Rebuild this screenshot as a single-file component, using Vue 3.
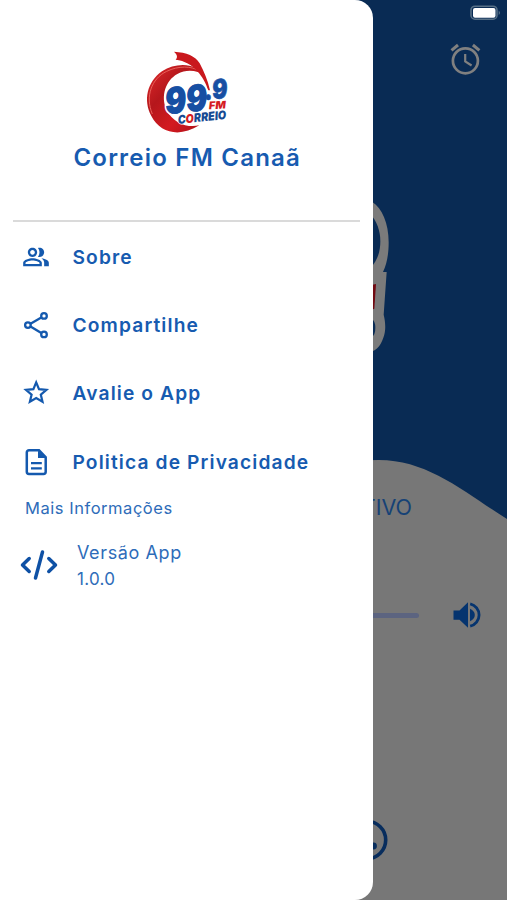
<script setup>
const menu = [
  { id: 'about', label: 'Sobre' },
  { id: 'share', label: 'Compartilhe' },
  { id: 'rate', label: 'Avalie o App' },
  { id: 'privacy', label: 'Politica de Privacidade' },
]
const icons = {
  about: 'M16.67 13.13C18.04 14.06 19 15.32 19 17v3h4v-3c0-2.18-3.57-3.47-6.33-3.87zM15 12c2.21 0 4-1.79 4-4s-1.79-4-4-4c-.47 0-.91.1-1.33.24C14.5 5.27 15 6.58 15 8s-.5 2.73-1.33 3.76c.42.14.86.24 1.33.24zM9 12c2.21 0 4-1.79 4-4s-1.79-4-4-4-4 1.79-4 4 1.79 4 4 4zm0-6c1.1 0 2 .9 2 2s-.9 2-2 2-2-.9-2-2 .9-2 2-2zM9 13c-2.67 0-8 1.34-8 4v3h16v-3c0-2.66-5.33-4-8-4zm6 5H3v-.99C3.2 16.29 6.3 15 9 15s5.8 1.29 6 2v1z',
}
</script>

<template>
  <div class="screen">
    <main class="player">
      <svg class="backdrop" viewBox="0 0 507 900">
        <path fill="#092b54" d="M0 0H507V519C464 492 428 460 379 460C250 460 130 520 0 519Z" />
      </svg>
      <header class="status">
        <svg width="32" height="16" viewBox="0 0 32 16">
          <rect x="1" y="1.2" width="26" height="13" rx="4" fill="none" stroke="#577087" stroke-width="1.6" />
          <rect x="3" y="3" width="22.5" height="9.8" rx="2" fill="#fff" />
          <path d="M28.7 5.4Q31.3 7.8 28.7 10Z" fill="#577087" />
        </svg>
      </header>
      <div class="alarm">
        <svg width="32" height="32" viewBox="0 0 32 32" fill="none" stroke="#808080">
          <circle cx="16.4" cy="17.8" r="12.5" stroke-width="2.7" />
          <path d="M16.2 11v7.5l6.4 4" stroke-width="2.2" />
          <path d="M2.5 7.4 9 2M23.9 2l6.5 5.4" stroke-width="3" />
        </svg>
      </div>
      <div class="cover">
        <svg width="60" height="180" viewBox="0 0 180 540">
          <path fill="#7b7b7b" d="M0 35H66C96 54 116 99 116 157C116 195 110 223 99 246H110L101 374C107 398 108 423 100 443C92 467 80 480 66 484H0Z" />
          <path fill="#092b54" d="M60 72C80 90 91 124 91 153C91 185 83 211 60 235Z" />
          <path fill="#710911" d="M64 285 78 282 73 356 64 360Z" />
          <path fill="#092b54" d="M64 387Q76 391 76 414T64 441Z" />
        </svg>
      </div>
      <p class="live">ATIVO</p>
      <div class="volume">
        <span class="track"></span>
        <svg width="30" height="30" viewBox="0 0 30 30">
          <path fill="#05346f" d="M1.5 10.5h6L16 2.3v25.4l-8.5-8H1.5zM18 8.7q4.8 2.2 4.8 6.3T18 21.3z" />
          <path d="M18.2 3.8a11.5 11.5 0 0 1 0 22.4" fill="none" stroke="#05346f" stroke-width="2.8" />
        </svg>
      </div>
      <footer class="contact">
        <svg width="44" height="44" viewBox="0 0 44 44">
          <circle cx="22" cy="22" r="18.7" fill="none" stroke="#082d5d" stroke-width="3.6" />
          <circle cx="28.5" cy="28" r="3.4" fill="#082d5d" />
        </svg>
      </footer>
    </main>

    <aside class="drawer">
      <div class="brand">
        <svg class="logo" width="115" height="100" viewBox="0 0 345 300">
          <defs>
            <linearGradient id="ring" x1="0" y1="0" x2="1" y2="1">
              <stop offset="0" stop-color="#e22a2c" />
              <stop offset=".35" stop-color="#b5171c" />
              <stop offset=".65" stop-color="#d31a20" />
              <stop offset="1" stop-color="#a90f18" />
            </linearGradient>
          </defs>
          <path fill="url(#ring)" d="M225 106C198 69 139 66 96 94C51 126 39 181 64 228C90 280 150 293 208 256C172 264 130 250 109 209C92 169 106 122 142 102C170 87 201 91 225 106Z" />
          <path d="M67 222C45 170 64 116 110 94C145 77 184 77 211 94" fill="none" stroke="#e9605a" stroke-width="3" />
          <path fill="#c9181d" d="M132 35C170 37 196 48 209 70C222 94 233 120 240 151L235 151C222 111 191 65 137 59Q147 48 132 35Z" />
          <g font-family="Inter, sans-serif" font-weight="900">
            <g transform="rotate(-6 170 180)" fill="#174fa3" stroke-linejoin="round" paint-order="stroke">
              <text x="105" y="216" font-size="108" font-style="italic" stroke="#fff" stroke-width="12" textLength="126" lengthAdjust="spacingAndGlyphs">99</text>
              <text x="105" y="216" font-size="108" font-style="italic" stroke="#174fa3" stroke-width="2" textLength="126" lengthAdjust="spacingAndGlyphs">99</text>
              <text x="225" y="186" font-size="80" font-style="italic" stroke="#174fa3" stroke-width="2" textLength="70" lengthAdjust="spacingAndGlyphs">.9</text>
            </g>
            <text transform="rotate(-3 237 205)" x="237" y="208" font-size="32" font-style="italic" fill="#d51b23" textLength="51" lengthAdjust="spacingAndGlyphs">FM</text>
            <text transform="rotate(-6 146 248)" x="144" y="252" font-size="36" font-style="italic" fill="#164a92" stroke="#fff" stroke-width="4" paint-order="stroke" textLength="146" lengthAdjust="spacingAndGlyphs">C<tspan fill="#d51b23">O</tspan>RREIO</text>
          </g>
        </svg>
        <h1>Correio FM Canaã</h1>
      </div>
      <nav>
        <a v-for="item in menu" :key="item.id">
          <svg v-if="item.id === 'share'" class="icon" viewBox="0 0 28 28" fill="none" stroke="#1459ae" stroke-width="2.3">
            <path d="M8.5 12.8 19.3 6.5M8.5 15.4l10.8 6.6" />
            <circle cx="5.9" cy="14.1" r="2.8" /><circle cx="22" cy="4.9" r="2.8" /><circle cx="22" cy="23.4" r="2.8" />
          </svg>
          <svg v-else-if="item.id === 'rate'" class="icon" viewBox="0 0 28 28" fill="none" stroke="#1459ae" stroke-width="2.2">
            <path d="M14.2 3.4 17 10.2 24.4 10.8 18.8 15.6 20.5 22.8 14.2 19 7.9 22.8 9.6 15.6 4 10.8 11.4 10.2Z" />
          </svg>
          <svg v-else-if="item.id === 'privacy'" class="icon" viewBox="0 0 28 28">
            <path d="M7 2.2H17l6.7 7V23.8a2.2 2.2 0 0 1-2.2 2.2H7A2.2 2.2 0 0 1 4.8 23.8V4.4A2.2 2.2 0 0 1 7 2.2Z" fill="none" stroke="#1459ae" stroke-width="2.5" />
            <path d="M16 2.5V10h8Z" fill="#1459ae" />
            <path d="M9 15.2h10.8M9 20.3h10.8" stroke="#1459ae" stroke-width="2.2" />
          </svg>
          <svg v-else class="icon" viewBox="0 0 24 24" fill="#1459ae"><path :d="icons[item.id]" /></svg>
          <span>{{ item.label }}</span>
        </a>
      </nav>
      <p class="section">Mais Informações</p>
      <div class="version">
        <svg width="38" height="32" viewBox="0 0 38 32" fill="none" stroke="#0f51a5" stroke-width="3.5" stroke-linecap="round" stroke-linejoin="round">
          <path d="M9.2 9.5 2.5 16l6.7 6.5M28.8 9.5l6.7 6.5-6.7 6.5M22.5 3 15.5 29" />
        </svg>
        <div>
          <p class="name">Versão App</p>
          <p class="number">1.0.0</p>
        </div>
      </div>
    </aside>
  </div>
</template>

<style>
body { margin: 0; }
</style>

<style scoped>
.screen { display: grid; width: 507px; height: 900px; overflow: hidden; background: #777; font-family: Inter, sans-serif; }
.player, .drawer { grid-area: 1 / 1; box-sizing: border-box; height: 900px; }
.player { display: flex; flex-direction: column; position: relative; z-index: 0; }
.backdrop { position: absolute; inset: 0; width: 507px; height: 900px; z-index: -1; }
p, h1 { margin: 0; }
svg { display: block; flex: none; }
.status { height: 43px; display: flex; justify-content: flex-end; padding: 5px 5px 0 0; box-sizing: border-box; }
.alarm { height: 147px; display: flex; justify-content: flex-end; padding-right: 26px; }
.cover { height: 303px; padding-left: 350px; }
.live { height: 30px; line-height: 29px; width: 412px; text-align: right; font-size: 21.5px; font-weight: 400; color: #164276; }
.volume { height: 30px; margin-top: 77px; display: flex; align-items: center; justify-content: space-between; padding: 0 25px 0 90px; }
.track { width: 329px; height: 5px; border-radius: 3px; background: #5c6480; }
.contact { margin-top: 188px; padding-left: 345px; }

.drawer { width: 372.5px; z-index: 1; background: #fff; border-radius: 0 18px 18px 0; color: #175bb0; }
.brand { box-sizing: border-box; height: 182px; margin: 40px 13px 0; border-bottom: 2px solid #dadada; display: flex; flex-direction: column; align-items: center; }
.logo { height: 100px; margin-left: 2px; }
h1 { font-size: 24px; line-height: 36px; font-weight: 600; letter-spacing: 1.22px; white-space: nowrap; padding-left: 2px; }
nav { display: flex; flex-direction: column; padding: .4px 0 0 22px; }
nav a { display: flex; align-items: center; gap: 22.5px; height: 68.4px; font-size: 19.2px; font-weight: 600; letter-spacing: 1.12px; white-space: nowrap; }
.icon { width: 28px; height: 28px; }
.section { padding-left: 25px; padding-top: 1px; line-height: 22px; font-size: 16.5px; letter-spacing: .54px; color: #2e6cb9; }
.version { display: flex; align-items: center; gap: 19px; margin-top: 19px; padding-left: 20px; color: #2e6cb9; }
.name { padding-top: 2px; font-size: 18px; line-height: 26px; letter-spacing: .62px; }
.number { font-size: 17px; line-height: 26px; letter-spacing: .3px; }
</style>
